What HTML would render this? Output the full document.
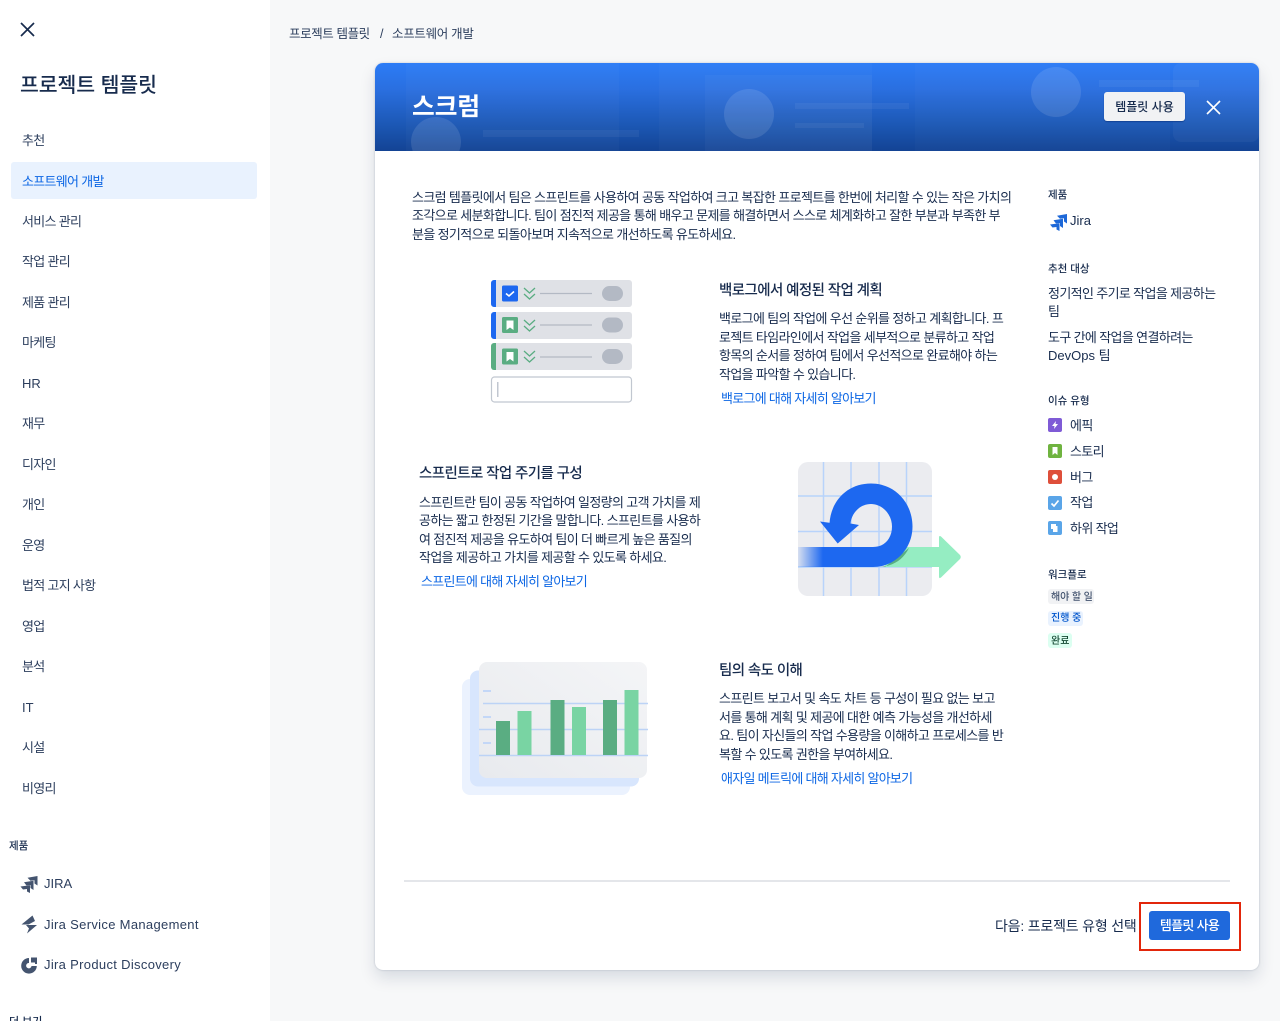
<!DOCTYPE html>
<html lang="ko"><head><meta charset="utf-8"><title>프로젝트 템플릿</title>
<style>
html,body{margin:0;padding:0;width:1280px;height:1021px;overflow:hidden}
body{position:relative;background:#f7f8f9;font-family:"Liberation Sans","Noto Sans CJK KR",sans-serif;color:#172b4d;font-size:13px}
.t{position:absolute;white-space:nowrap;line-height:20px;margin-top:1px}
.n{left:22px;color:#2c3e5d;font-size:13px;letter-spacing:-.7px}
.b{font-size:13px;color:#172b4d;letter-spacing:-.64px}
.h{font-size:14.5px;font-weight:500;color:#172b4d;letter-spacing:-.6px;margin-top:2px}
.l{font-size:13px;color:#0c66e4;letter-spacing:-.72px}
.s{font-size:10.5px;font-weight:500;color:#172b4d}
.a{position:absolute}
</style></head><body>
<div class="a" style="left:0;top:0;width:270px;height:1021px;background:#fff"></div>
<svg class="a" style="left:20px;top:22px" width="15" height="15" viewBox="0 0 15 15"><path d="M1 1L14 14M14 1L1 14" stroke="#172b4d" stroke-width="1.7" fill="none"/></svg>
<div class="t" style="left:20px;top:72px;font-size:20.5px;line-height:24px;font-weight:500;margin-top:2px;letter-spacing:-.1px">프로젝트 템플릿</div>
<div class="t n" style="top:130px">추천</div>
<div class="a" style="left:11px;top:162px;width:246px;height:37px;background:#e9f2fe;border-radius:3px"></div>
<div class="t n" style="top:171px;color:#0c66e4">소프트웨어 개발</div>
<div class="t n" style="top:211px">서비스 관리</div>
<div class="t n" style="top:251px">작업 관리</div>
<div class="t n" style="top:292px">제품 관리</div>
<div class="t n" style="top:332px">마케팅</div>
<div class="t n" style="top:373px;letter-spacing:0">HR</div>
<div class="t n" style="top:413px">재무</div>
<div class="t n" style="top:454px">디자인</div>
<div class="t n" style="top:494px">개인</div>
<div class="t n" style="top:535px">운영</div>
<div class="t n" style="top:575px">법적 고지 사항</div>
<div class="t n" style="top:616px">영업</div>
<div class="t n" style="top:656px">분석</div>
<div class="t n" style="top:697px;letter-spacing:0">IT</div>
<div class="t n" style="top:737px">시설</div>
<div class="t n" style="top:778px">비영리</div>
<div class="t s" style="left:9px;top:835px">제품</div>
<svg class="a" style="left:20px;top:875px" width="18" height="18" viewBox="0 0 18 18" fill="#44546f"><path d="M7.500 2.800L17.500 1V10.500L14.500 8.500V5.300L10.500 5.800zM4 7.300L13.500 5.800V15L10.500 13V10L6.500 10.500zM.5 11.500L10 10.300V18L7 16.500V14L3 14.500z"/></svg>
<div class="t" style="left:44px;top:873px;color:#2c3e5d">JIRA</div>
<svg class="a" style="left:20px;top:915px" width="18" height="19" viewBox="0 0 18 19" fill="#44546f"><path d="M12.500.5L15 6 8.500 9.500H1.500zM6 10H17L7 18.500 9 13.500z"/></svg>
<div class="t" style="left:44px;top:914px;color:#2c3e5d;letter-spacing:.32px">Jira Service Management</div>
<svg class="a" style="left:20px;top:956px" width="18" height="18" viewBox="0 0 18 18" fill="#44546f"><path d="M9 2A7.800 7.800 0 1 0 16.800 10H11.500A2.700 2.700 0 1 1 9 7zM11 1.500h6V8h-2V6.500h-4z"/></svg>
<div class="t" style="left:44px;top:954px;color:#2c3e5d;letter-spacing:.32px">Jira Product Discovery</div>
<div class="t" style="left:9px;top:1011px;font-size:11px;font-weight:500">더 보기</div>

<div class="t" style="left:289px;top:23px;font-size:12.5px;color:#2c3e5d;letter-spacing:-.4px">프로젝트 템플릿</div>
<div class="t" style="left:380px;top:23px;font-size:12.5px;color:#2c3e5d">/</div>
<div class="t" style="left:392px;top:23px;font-size:12.5px;color:#2c3e5d;letter-spacing:-.3px">소프트웨어 개발</div>

<div class="a" style="left:375px;top:63px;width:884px;height:907px;background:#fff;border-radius:8px;box-shadow:0 8px 16px rgba(9,30,66,.13),0 0 2px rgba(9,30,66,.2)"></div>
<div class="a" style="left:375px;top:63px;width:884px;height:88px;border-radius:8px 8px 0 0;overflow:hidden;background:linear-gradient(180deg,#2c7cf6 0%,#2a6fe0 30%,#1c58b5 70%,#134394 100%)">
<svg width="884" height="88" style="position:absolute;left:0;top:0">
<g fill="#fff">
<rect x="31" y="0" width="213" height="88" opacity=".025"/>
<rect x="284" y="0" width="213" height="88" opacity=".025"/>
<rect x="330" y="12" width="167" height="76" opacity=".03"/>
<rect x="540" y="0" width="91" height="88" opacity=".02"/>
<rect x="631" y="0" width="164" height="88" opacity=".02"/>
<rect x="108" y="67" width="156" height="7" opacity=".05"/>
<rect x="420" y="40" width="114" height="6" opacity=".05"/>
<rect x="420" y="60" width="69" height="5" opacity=".05"/>
<rect x="724" y="17" width="100" height="7" opacity=".05"/>
<rect x="798" y="0" width="86" height="79" rx="8" opacity=".04"/>
<circle cx="61" cy="79" r="25" opacity=".11"/>
<circle cx="374" cy="51" r="25" opacity=".11"/>
<circle cx="681" cy="29" r="25" opacity=".11"/>
</g></svg>
</div>
<div class="t" style="left:412px;top:92px;font-size:24.7px;line-height:30px;font-weight:700;color:#fff">스크럼</div>
<div class="a" style="left:1104px;top:92px;width:81px;height:29px;background:#f1f2f4;border-radius:3px;text-align:center;line-height:31px;font-size:12px;font-weight:500;color:#172b4d;white-space:nowrap;box-shadow:0 1px 1px #134394">템플릿 사용</div>
<svg class="a" style="left:1206px;top:100px" width="15" height="15" viewBox="0 0 15 15"><path d="M1 1L14 14M14 1L1 14" stroke="#fff" stroke-width="1.6" fill="none"/></svg>

<div class="t b" style="left:412px;top:187px">스크럼 템플릿에서 팀은 스프린트를 사용하여 공동 작업하여 크고 복잡한 프로젝트를 한번에 처리할 수 있는 작은 가치의</div>
<div class="t b" style="left:412px;top:205px">조각으로 세분화합니다. 팀이 점진적 제공을 통해 배우고 문제를 해결하면서 스스로 체계화하고 잘한 부분과 부족한 부</div>
<div class="t b" style="left:412px;top:224px">분을 정기적으로 되돌아보며 지속적으로 개선하도록 유도하세요.</div>

<svg class="a" style="left:490px;top:279px" width="144" height="126" viewBox="0 0 144 126">
<g fill="#dfe1e6"><rect x="2" y="1" width="140" height="27" rx="3"/><rect x="2" y="33" width="140" height="27" rx="3"/><rect x="2" y="64" width="140" height="27" rx="3"/></g>
<path d="M6 1H4a3 3 0 0 0-3 3v21a3 3 0 0 0 3 3h2zM6 33H4a3 3 0 0 0-3 3v21a3 3 0 0 0 3 3h2z" fill="#1d68f0"/>
<path d="M6 64H4a3 3 0 0 0-3 3v21a3 3 0 0 0 3 3h2z" fill="#5aad82"/>
<rect x="12" y="6.500" width="16" height="16" rx="1.500" fill="#1d68f0"/><path d="M16 14.500l3 2.500 5-4.500" stroke="#fff" stroke-width="1.600" fill="none"/>
<rect x="12" y="38" width="16" height="16" rx="1.500" fill="#5aad82"/><path d="M16.500 41.500h7v9.500l-3.500-2.500-3.500 2.500z" fill="#fff"/>
<rect x="12" y="69.500" width="16" height="16" rx="1.500" fill="#5aad82"/><path d="M16.500 73h7v9.500l-3.500-2.500-3.500 2.500z" fill="#fff"/>
<g stroke="#5aad82" stroke-width="1.300" fill="none"><path d="M34 9l5.500 5 5.500-5M34 15l5.500 5 5.500-5M34 41l5.500 5 5.500-5M34 47l5.500 5 5.500-5M34 72l5.500 5 5.500-5M34 78l5.500 5 5.500-5"/></g>
<path d="M50 14.500h52M50 46h52M50 78h52" stroke="#b3b9c4" stroke-width="1.300"/>
<g fill="#b3b9c4"><rect x="112" y="7" width="21" height="15" rx="7.500"/><rect x="112" y="38.500" width="21" height="15" rx="7.500"/><rect x="112" y="70" width="21" height="15" rx="7.500"/></g>
<rect x="1.500" y="98" width="140" height="25" rx="3" fill="#fff" stroke="#c1c7d0" stroke-width="1.200"/>
<rect x="7" y="103" width="1.500" height="15" fill="#c1c7d0"/>
</svg>

<div class="t h" style="left:719px;top:279px">백로그에서 예정된 작업 계획</div>
<div class="t b" style="left:719px;top:308px">백로그에 팀의 작업에 우선 순위를 정하고 계획합니다. 프</div>
<div class="t b" style="left:719px;top:327px">로젝트 타임라인에서 작업을 세부적으로 분류하고 작업</div>
<div class="t b" style="left:719px;top:345px">항목의 순서를 정하여 팀에서 우선적으로 완료해야 하는</div>
<div class="t b" style="left:719px;top:364px">작업을 파악할 수 있습니다.</div>
<div class="t l" style="left:721px;top:388px">백로그에 대해 자세히 알아보기</div>

<div class="t h" style="left:419px;top:462px">스프린트로 작업 주기를 구성</div>
<div class="t b" style="left:419px;top:492px">스프린트란 팀이 공동 작업하여 일정량의 고객 가치를 제</div>
<div class="t b" style="left:419px;top:510px">공하는 짧고 한정된 기간을 말합니다. 스프린트를 사용하</div>
<div class="t b" style="left:419px;top:529px">여 점진적 제공을 유도하여 팀이 더 빠르게 높은 품질의</div>
<div class="t b" style="left:419px;top:547px">작업을 제공하고 가치를 제공할 수 있도록 하세요.</div>
<div class="t l" style="left:421px;top:571px">스프린트에 대해 자세히 알아보기</div>

<svg class="a" style="left:785px;top:450px" width="190" height="155" viewBox="0 0 190 155">
<defs><clipPath id="c"><rect x="13" y="12" width="134" height="134" rx="10"/></clipPath>
<linearGradient id="g" x1="13" x2="38" y1="0" y2="0" gradientUnits="userSpaceOnUse"><stop offset="0" stop-color="#1d68f0" stop-opacity=".1"/><stop offset="1" stop-color="#1d68f0"/></linearGradient></defs>
<rect x="13" y="12" width="134" height="134" rx="10" fill="#ebecf0"/>
<g clip-path="url(#c)" stroke="#b8d3fb" stroke-width="1.500"><path d="M38.500 12v134M66 12v134M94 12v134M121.500 12v134M13 46h134M13 81.500h134M13 117h134"/></g>
<path d="M100 97h54V87.500q0-2.500 2-1L175 105q1.500 2 0 4l-19 18.500q-2 1.500-2-1V117h-54z" fill="#95edc2"/>
<path d="M124 98C118 110 108 116 95 117H100z" fill="#5aad82"/>
<path d="M13 97H88C100 97 107 88 107 76.500C107 64 97 54 86 54C75 54 66.500 63 65.500 73.500H44.500C46 50 63 33.500 86 33.500C110 33.500 127.500 53 127.500 76.500C127.500 99 110 117 88 117H13z" fill="url(#g)"/>
<path d="M35 71.500L50 73.500 65.500 73.500 74 75 52.700 93.500z" fill="#1d68f0"/>
</svg>

<svg class="a" style="left:450px;top:650px" width="210" height="155" viewBox="0 0 210 155">
<defs><linearGradient id="h" x1="0" y1="1" x2="1" y2="0"><stop offset="0" stop-color="#e8eaee"/><stop offset="1" stop-color="#f4f5f7"/></linearGradient></defs>
<rect x="12" y="29" width="168" height="116" rx="8" fill="#ebf2fe"/>
<rect x="20" y="20.500" width="169" height="116" rx="8" fill="#d8e6fd"/>
<rect x="29" y="12" width="168" height="116" rx="8" fill="url(#h)"/>
<g fill="#c3d7f7"><rect x="33" y="40" width="8" height="2"/><rect x="33" y="66" width="8" height="2"/><rect x="33" y="92" width="8" height="2"/></g>
<path d="M33 53.500H198M29 79.500H198M29 105.500H198" stroke="#bcd3f6" stroke-width="1.500"/>
<g fill="#5aad82"><rect x="46" y="71" width="14" height="34"/><rect x="100.500" y="50" width="14" height="55"/><rect x="153" y="50" width="14" height="55"/></g>
<g fill="#79d4a3"><rect x="67.500" y="61" width="14" height="44"/><rect x="122" y="57" width="14" height="48"/><rect x="174.500" y="40" width="14" height="65"/></g>
</svg>

<div class="t h" style="left:719px;top:659px">팀의 속도 이해</div>
<div class="t b" style="left:719px;top:688px">스프린트 보고서 및 속도 차트 등 구성이 필요 없는 보고</div>
<div class="t b" style="left:719px;top:707px">서를 통해 계획 및 제공에 대한 예측 가능성을 개선하세</div>
<div class="t b" style="left:719px;top:725px">요. 팀이 자신들의 작업 수용량을 이해하고 프로세스를 반</div>
<div class="t b" style="left:719px;top:744px">복할 수 있도록 권한을 부여하세요.</div>
<div class="t l" style="left:721px;top:768px">애자일 메트릭에 대해 자세히 알아보기</div>

<div class="t s" style="left:1048px;top:184px">제품</div>
<svg class="a" style="left:1049px;top:213px" width="19" height="18" viewBox="0 0 18 18" fill="#1d68d8"><path d="M7.500 2.800L17.500 1V10.500L14.500 8.500V5.300L10.500 5.800zM4 7.300L13.500 5.800V15L10.500 13V10L6.500 10.500zM.5 11.500L10 10.300V18L7 16.500V14L3 14.500z"/></svg>
<div class="t" style="left:1070px;top:210px;font-size:13px">Jira</div>
<div class="t s" style="left:1048px;top:258px">추천 대상</div>
<div class="t b" style="left:1048px;top:283px">정기적인 주기로 작업을 제공하는</div>
<div class="t b" style="left:1048px;top:301px">팀</div>
<div class="t b" style="left:1048px;top:327px">도구 간에 작업을 연결하려는</div>
<div class="t b" style="left:1048px;top:345px;letter-spacing:0">DevOps 팀</div>
<div class="t s" style="left:1048px;top:390px">이슈 유형</div>
<svg class="a" style="left:1048px;top:418px" width="14" height="14" viewBox="0 0 14 14"><rect width="14" height="14" rx="2" fill="#7f5bd6"/><path d="M8 3L4 8h2.500L6 11l4-5H7.500z" fill="#fff"/></svg>
<div class="t b" style="left:1070px;top:415px">에픽</div>
<svg class="a" style="left:1048px;top:444px" width="14" height="14" viewBox="0 0 14 14"><rect width="14" height="14" rx="2" fill="#6fb33f"/><path d="M4.500 3h5v8L7 9l-2.500 2z" fill="#fff"/></svg>
<div class="t b" style="left:1070px;top:441px">스토리</div>
<svg class="a" style="left:1048px;top:470px" width="14" height="14" viewBox="0 0 14 14"><rect width="14" height="14" rx="2" fill="#de4f3a"/><circle cx="7" cy="7" r="3" fill="#fff"/></svg>
<div class="t b" style="left:1070px;top:467px">버그</div>
<svg class="a" style="left:1048px;top:496px" width="14" height="14" viewBox="0 0 14 14"><rect width="14" height="14" rx="2" fill="#5aa5e8"/><path d="M3.500 7.500L6 10l4.500-5.500" stroke="#fff" stroke-width="1.700" fill="none"/></svg>
<div class="t b" style="left:1070px;top:492px">작업</div>
<svg class="a" style="left:1048px;top:521px" width="14" height="14" viewBox="0 0 14 14"><rect width="14" height="14" rx="2" fill="#5aa5e8"/><path d="M3 3h5v2h1.500v6H5V8H3z" fill="#fff"/></svg>
<div class="t b" style="left:1070px;top:518px">하위 작업</div>
<div class="t s" style="left:1048px;top:564px">워크플로</div>
<div class="a" style="left:1048px;top:589px;width:46px;height:15px;background:#f1f2f4;border-radius:3px"></div>
<div class="t" style="left:1051px;top:587px;font-size:10px;font-weight:500;color:#44546f;letter-spacing:-.1px">해야 할 일</div>
<div class="a" style="left:1048px;top:611px;width:35px;height:15px;background:#e9f2fe;border-radius:3px"></div>
<div class="t" style="left:1051px;top:608px;font-size:10px;font-weight:500;color:#0055cc">진행 중</div>
<div class="a" style="left:1048px;top:633px;width:24px;height:15px;background:#dcfff1;border-radius:3px"></div>
<div class="t" style="left:1051px;top:631px;font-size:10px;font-weight:500;color:#164b35">완료</div>

<div class="a" style="left:404px;top:880px;width:826px;height:2px;background:#e4e6ea"></div>
<div class="t" style="left:995px;top:915px;font-size:14px;letter-spacing:-.2px">다음: 프로젝트 유형 선택</div>
<div class="a" style="left:1139px;top:902px;width:98px;height:45px;border:2px solid #e2260b"></div>
<div class="a" style="left:1149px;top:911px;width:81px;height:29px;background:#1f69dc;border-radius:3px;text-align:center;line-height:30px;color:#fff;font-size:13px;font-weight:500;white-space:nowrap;letter-spacing:-.7px">템플릿 사용</div>
</body></html>
